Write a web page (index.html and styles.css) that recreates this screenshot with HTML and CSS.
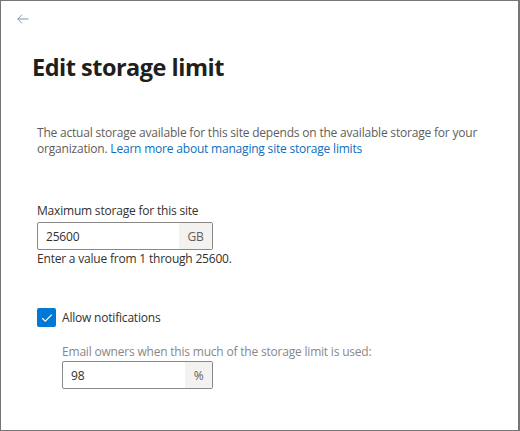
FILE: index.html
```html
<!DOCTYPE html>
<html>
<head>
<meta charset="utf-8">
<link rel="stylesheet" href="styles.css">
</head>
<body>
<div class="panel">
  <div class="topbar">
    <button class="back" aria-label="Back">
      <svg width="12" height="10" viewBox="0 0 12 10"><path d="M5 0.7 L0.8 5 L5 9.3 M0.8 5 H11.5" fill="none" stroke="#7f93b8" stroke-width="1"/></svg>
    </button>
  </div>
  <h1 class="title">Edit storage limit</h1>
  <div class="content">
    <p class="desc">The actual storage available for this site depends on the available storage for your organization. <a href="#" class="link">Learn more about managing site storage limits</a></p>
    <div class="field">
      <label class="label">Maximum storage for this site</label>
      <div class="input wide">
        <span class="value">25600</span>
        <span class="suffix">GB</span>
      </div>
      <div class="hint">Enter a value from 1 through 25600.</div>
    </div>
    <div class="check-row">
      <span class="checkbox">
        <svg width="12" height="10" viewBox="0 0 12 10"><path d="M1.2 5.2 L4.3 8.2 L10.8 1.6" fill="none" stroke="#fff" stroke-width="1.2"/></svg>
      </span>
      <span class="check-label">Allow notifications</span>
    </div>
    <div class="sub">
      <div class="sub-label">Email owners when this much of the storage limit is used:</div>
      <div class="input narrow">
        <span class="value">98</span>
        <span class="suffix pct">%</span>
      </div>
    </div>
  </div>
</div>
</body>
</html>
```
FILE: styles.css
```css
html, body {
  margin: 0;
  padding: 0;
  background: #fff;
}
body {
  font-family: "Open Sans", "Noto Sans", sans-serif;
  color: #323130;
}
.panel {
  box-sizing: border-box;
  width: 520px;
  height: 431px;
  border: 1px solid #767676;
  border-right-width: 2px;
  background: #fff;
}
.topbar {
  height: 36px;
  padding-left: 15px;
  display: flex;
  align-items: center;
}
.back {
  border: 0;
  background: none;
  padding: 0;
  margin-top: -1px;
  width: 14px;
  height: 14px;
  display: flex;
  align-items: center;
  justify-content: center;
}
.title {
  margin: 12px 0 0 31px;
  font-size: 23.5px;
  font-weight: 700;
  line-height: 36px;
  color: #201f1e;
  letter-spacing: -0.5px;
}
.content {
  padding-left: 36px;
  padding-right: 20px;
  font-size: 12px;
  letter-spacing: -0.2px;
}
.desc {
  margin: 40px 0 0;
  line-height: 16px;
  color: #605e5c;
}
.link {
  color: #106ebe;
  text-decoration: none;
}
.field {
  margin-top: 45px;
}
.label {
  display: block;
  line-height: 18px;
  color: #323130;
}
.input {
  box-sizing: border-box;
  display: flex;
  height: 28px;
  margin-top: 2px;
  border: 1px solid #8a8886;
  border-radius: 2px;
}
.wide { width: 176px; }
.narrow { width: 151px; }
.value {
  flex: 1;
  display: flex;
  align-items: center;
  padding-left: 8px;
  color: #323130;
}
.suffix {
  display: flex;
  align-items: center;
  justify-content: center;
  width: 33px;
  background: #f3f2f1;
  color: #605e5c;
}
.suffix.pct { width: 27px; }
.hint {
  line-height: 18px;
  color: #323130;
}
.check-row {
  display: flex;
  align-items: center;
  margin-top: 40px;
}
.checkbox {
  box-sizing: border-box;
  width: 19px;
  height: 19px;
  border-radius: 2px;
  background: #0078d4;
  display: flex;
  align-items: center;
  justify-content: center;
}
.check-label {
  margin-left: 6px;
  color: #323130;
}
.sub {
  padding-left: 25px;
  margin-top: 16px;
}
.sub-label {
  line-height: 18px;
  color: #8a8886;
}
.sub .input { margin-top: 0; }
```
